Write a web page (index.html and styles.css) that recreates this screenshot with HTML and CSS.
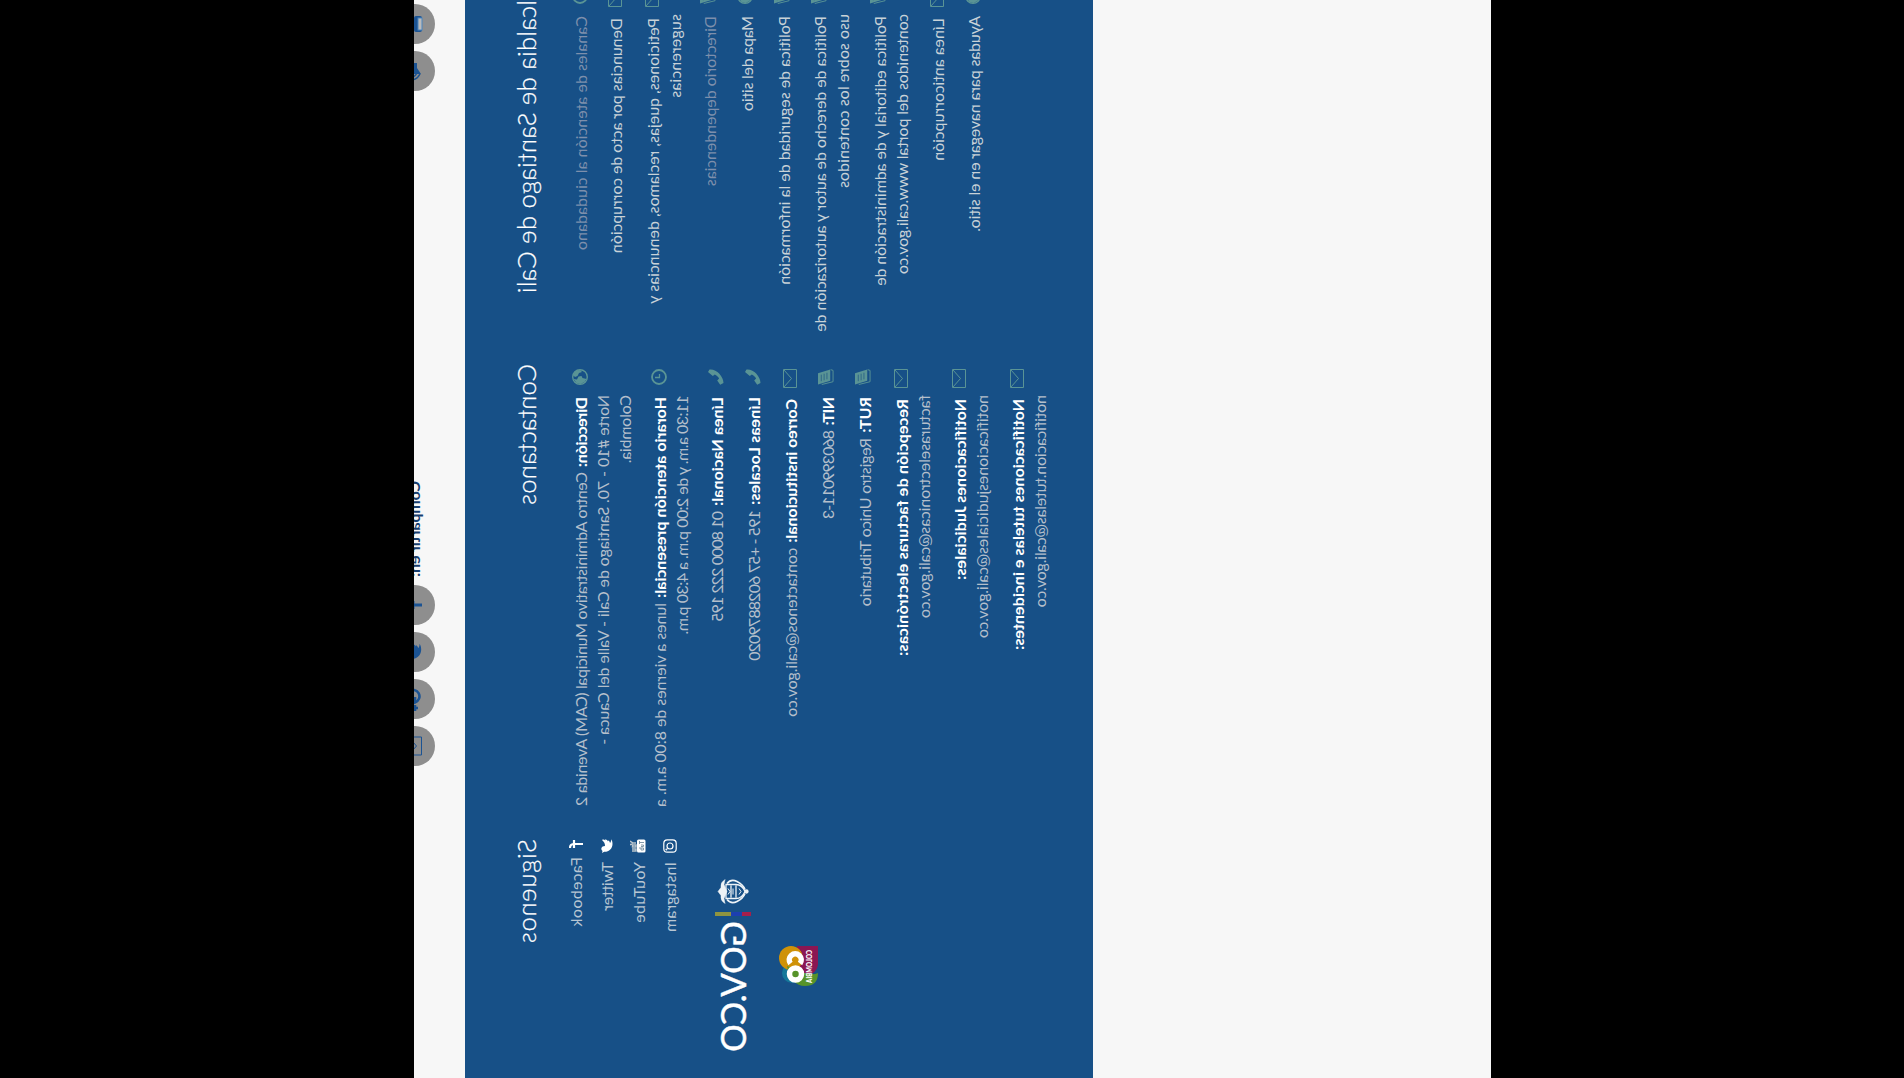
FILE: index.html
```html
<!DOCTYPE html>
<html lang="es">
<head>
<meta charset="utf-8">
<title>Alcaldía de Santiago de Cali</title>
<link rel="stylesheet" href="styles.css">
</head>
<body>
<svg class="defs" width="0" height="0">
  <symbol id="mail" viewBox="0 0 19 14"><path d="M.5.5h18v13H.5zM1 1l8.500 7.500L18 1" fill="none" stroke="currentColor"/></symbol>
  <symbol id="globe" viewBox="0 0 16 16"><circle cx="8" cy="8" r="7.300" fill="none" stroke="currentColor" stroke-width="1.400"/><path d="M2 3.500 6 1l2 2-1 2.500-3 1.500L3 10 1 8zM10 1.500l4 3 1 4-2 4-3 2-1-4-2-1 .5-3 3-1.500z" fill="currentColor"/></symbol>
  <symbol id="clock" viewBox="0 0 16 16"><circle cx="8" cy="8" r="7" fill="none" stroke="currentColor" stroke-width="1.800"/><path d="M8.500 4v4.500H5" fill="none" stroke="currentColor" stroke-width="1.300"/></symbol>
  <symbol id="phone" viewBox="0 0 16 16"><path d="M3 0 .5 1.500C-.5 8 7 15.500 14 15.500l1.700-3.300-4.200-3-2 1.900C8 10.300 6 8.500 5.500 6.800l1.500-2z" fill="currentColor"/></symbol>
  <symbol id="book" viewBox="0 0 17 17"><path d="M4.500 0h12l-4 13H.5z" fill="currentColor"/><path d="M6 3.500h7M5 6.500h7M4 9.500h7" fill="none" stroke="#2c6587"/><path d="M.7 13.500 1.500 16h12l3-12" fill="none" stroke="currentColor"/></symbol>
  <symbol id="bird" viewBox="0 0 14 14"><path d="M1 2c2 2.200 3.500 3 6 3 0-4 3.500-4.500 5-2.500L14 2l-1.200 2.200C13 9 9.500 12.500 5 12.500 3 12.500 1.500 12 .3 11.200c1.500 0 2.700-.3 3.700-1.200-1.500-.2-2.200-1-2.500-2h1C1 7.400.5 6.400.5 5l1 .3C.3 4.300.4 3 1 2z" fill="currentColor"/></symbol>
</svg>
<div class="page">
  <div class="shade top"></div>
  <div class="share">
    <span class="round"><svg viewBox="0 0 40 40"><rect x="12" y="19" width="16" height="8" rx="2" fill="#1b5393"/><rect x="14" y="23" width="12" height="4" fill="#bbb" stroke="#4a86c0"/></svg></span>
    <span class="round"><svg viewBox="0 0 40 40"><path d="M12 17h5l6-5v14l-6-4h-5z" fill="#1b5393"/><path d="M22 22q4-2 4-6M23 25q6-3 6-9" fill="none" stroke="#1b5393" stroke-width="1.500"/></svg></span>
    <b class="share-label fit" data-w="96">Compartir en:</b>
    <span class="round"><svg viewBox="0 0 40 40"><path d="M20 27V15q0-3 4-3M16 18h8" fill="none" stroke="#1b5393" stroke-width="3"/></svg></span>
    <span class="round blue"><svg viewBox="0 0 40 40"><use href="#bird" x="11" y="11" width="18" height="17"/></svg></span>
    <span class="round"><svg viewBox="0 0 40 40"><path d="M22.500 14a6.500 6.500 0 1 0 1 6H18M26 20h6M29 17v6" fill="none" stroke="#1b5393" stroke-width="2.600"/></svg></span>
    <span class="round blue"><svg viewBox="0 0 40 40"><use href="#mail" x="10" y="13" width="20" height="14"/></svg></span>
  </div>
  <footer class="footer">
    <section>
      <h2><span class="fit" data-w="311">Alcaldia de Santiago de Cali</span></h2>
      <ul class="strong">
        <li class="dim g-s"><svg><use href="#clock"/></svg><div><p><span class="fit" data-w="234">Canales de atención al ciudadano</span></p></div></li>
        <li><svg class="m"><use href="#mail"/></svg><div><p><span class="fit" data-w="235">Denuncias por acto de corrupción</span></p></div></li>
        <li class="g-s"><svg class="m"><use href="#mail"/></svg><div><p><span class="fit" data-w="286">Peticiones, quejas, reclamos, denuncias y</span></p><p><span class="fit" data-w="84">sugerencias</span></p></div></li>
        <li class="dim"><svg><use href="#book"/></svg><div><p><span class="fit" data-w="170">Directorio dependencias</span></p></div></li>
        <li><svg><use href="#globe"/></svg><div><p><span class="fit" data-w="95">Mapa del sitio</span></p></div></li>
        <li><svg><use href="#book"/></svg><div><p><span class="fit" data-w="269">Política de seguridad de la información</span></p></div></li>
        <li><svg><use href="#book"/></svg><div><p><span class="fit" data-w="316">Política de derecho de autor y autorización de</span></p><p><span class="fit" data-w="174">uso sobre los contenidos</span></p></div></li>
        <li class="g-m"><svg><use href="#book"/></svg><div><p><span class="fit" data-w="270">Política editorial y de administración de</span></p><p><span class="fit" data-w="260">contenidos del portal www.cali.gov.co</span></p></div></li>
        <li><svg class="m"><use href="#mail"/></svg><div><p><span class="fit" data-w="143">Línea anticorrupción</span></p></div></li>
        <li><svg><use href="#globe"/></svg><div><p><span class="fit" data-w="216">Ayudas para navegar en el sitio.</span></p></div></li>
      </ul>
    </section>
    <section>
      <h2><span class="fit" data-w="141">Contactanos</span></h2>
      <ul>
        <li class="g-s"><svg><use href="#globe"/></svg><div><p><b class="fit" data-w="70">Dirección:</b><span class="fit r" data-w="334">Centro Administrativo Municipal (CAM) Avenida 2</span></p><p><span class="fit" data-w="350">Norte #10 - 70. Santiago de Cali - Valle del Cauca -</span></p><p><span class="fit" data-w="68">Colombia.</span></p></div></li>
        <li class="g-s"><svg><use href="#clock"/></svg><div><p><b class="fit" data-w="201">Horario atención presencial:</b><span class="fit r" data-w="204">lunes a viernes de 8:00 a.m. a</span></p><p><span class="fit" data-w="239">11:30 a.m. y de 2:00 p.m. a 4:30 p.m.</span></p></div></li>
        <li><svg><use href="#phone"/></svg><div><p><b class="fit" data-w="109">Línea Nacional:</b><span class="fit r" data-w="110">01 8000 222 195</span></p></div></li>
        <li><svg><use href="#phone"/></svg><div><p><b class="fit" data-w="108">Líneas Locales:</b><span class="fit r" data-w="150">195 - +57 6028879020</span></p></div></li>
        <li><svg class="m"><use href="#mail"/></svg><div><p><b class="fit" data-w="144">Correo institucional:</b><span class="fit r" data-w="169">contactenos@cali.gov.co</span></p></div></li>
        <li><svg><use href="#book"/></svg><div><p><b class="fit" data-w="28">NIT:</b><span class="fit r" data-w="88">860399011-3</span></p></div></li>
        <li><svg><use href="#book"/></svg><div><p><b class="fit" data-w="36">RUT:</b><span class="fit r" data-w="168">Registro Unico Tributario</span></p></div></li>
        <li class="g-m"><svg class="m"><use href="#mail"/></svg><div><p><b class="fit" data-w="257">Recepción de facturas electrónicas:</b></p><p><span class="fit" data-w="223">facturaselectronicas@cali.gov.co</span></p></div></li>
        <li class="g-m"><svg class="m"><use href="#mail"/></svg><div><p><b class="fit" data-w="181">Notificaciones Judiciales:</b></p><p><span class="fit" data-w="243">notificacionesjudiciales@cali.gov.co</span></p></div></li>
        <li><svg class="m"><use href="#mail"/></svg><div><p><b class="fit" data-w="251">Notificaciones tutelas e incidentes:</b></p><p><span class="fit" data-w="212">notificacion.tutelas@cali.gov.co</span></p></div></li>
      </ul>
    </section>
    <section>
      <h2><span class="fit" data-w="105">Siguenos</span></h2>
      <ul class="social">
        <li><svg viewBox="0 0 14 14"><path d="M5 14V5q0-4 4-4M1 5h8" fill="none" stroke="currentColor" stroke-width="2.200"/></svg><span class="fit fb" data-w="70">Facebook</span></li>
        <li><svg><use href="#bird"/></svg><span class="fit" data-w="48">Twitter</span></li>
        <li><svg class="tall" viewBox="0 0 14 16"><path d="M2 0l2 3v3M4 3l2-3M6 2.500h2V6H6zM10 2v4h2V2" fill="none" stroke="#b9c4cc" stroke-width="1.500"/><rect x=".5" y="7" width="13" height="8.500" rx="1.500" fill="currentColor"/><path d="M2 9.500h3M3.500 9.500V14M6 11v2.500h1.500V11M9 9v4.500h2V11H9" fill="none" stroke="#8298a8"/></svg><span class="fit" data-w="61">YouTube</span></li>
        <li><svg viewBox="0 0 14 14" fill="none" stroke="currentColor" stroke-width="1.200"><rect x=".8" y=".8" width="12.400" height="12.400" rx="3.500"/><circle cx="7" cy="7" r="3"/><circle cx="10.600" cy="3.400" r=".4"/></svg><span class="fit" data-w="70">Instagram</span></li>
      </ul>
      <div class="gov">
        <svg class="crest" viewBox="0 0 26 32" fill="none" stroke="#eef3f7" stroke-width="1.300"><path d="M6 9h14v10q0 6-7 9-7-3-7-9zM7 14h12M7 19h12"/><path d="M5 10Q0 14 3 20t8 8M21 10q5 4 2 10t-8 8" stroke-width="1.700"/><path d="M1 8q3-5 8-4l4-3 4 3q5-1 8 4l-5-1-7 3-7-3z" fill="#eef3f7" stroke-width=".5"/><path d="M10 11l3 2 3-2M10 16h6M10 22l3 2 3-2" stroke-width="1"/><circle cx="13" cy="29.500" r="1.500" fill="#eef3f7"/></svg>
        <span class="flag"></span>
        <span class="wordmark fit" data-w="131">GOV.CO</span>
      </div>
      <svg class="brand" viewBox="0 0 40 40">
        <circle cx="27" cy="13" r="10" fill="#14779a"/>
        <path d="M0 18h20q8 0 8 10 0 10-10 10H0z" fill="#8b1653"/>
        <circle cx="12" cy="12" r="12" fill="#cf9208"/>
        <path d="M20 8q20 4 20 18 0 13-13 13 3-6-1-15z" fill="#579329"/>
        <path d="M0 18q6 6 12 6h15v10q-4 5-9 5H0z" fill="#8b1653"/>
        <g fill="none" stroke="#fff" stroke-width="5.500"><path d="M17.500 11.500a6 6 0 1 0 0 9.500"/><circle cx="28" cy="16.500" r="6"/></g>
        <text x="4" y="32.500" textLength="33" lengthAdjust="spacingAndGlyphs">COLOMBIA</text>
      </svg>
    </section>
  </footer>
  <div class="blank"></div>
  <div class="shade bottom"></div>
</div>
<script src="fit.js"></script>
</body>
</html>
```
FILE: styles.css
```css
* { box-sizing: border-box; }

html { overflow: hidden; height: 1078px; }

body {
  margin: 0;
  width: 1904px;
  height: 1078px;
  overflow: hidden;
  background: #000;
  font: 16px/22px Lato, "Open Sans", sans-serif;
}

.defs { position: absolute; }

/* Portrait page flipped along its diagonal */
.page {
  width: 1078px;
  height: 1904px;
  display: flex;
  flex-direction: column;
  transform: matrix(0, 1, 1, 0, 0, 0);
  transform-origin: 0 0;
}

.shade { background: #000; flex: none; }
.shade.top { height: 414px; }
.shade.bottom { flex: 1; }
.blank { height: 398px; background: #f7f7f7; }

.share {
  height: 51px;
  background: #f7f7f7;
  overflow: hidden;
  display: flex;
  align-items: flex-start;
  gap: 7px;
  padding-left: 4px;
}
.round {
  width: 40px;
  height: 40px;
  margin-top: -19px;
  border-radius: 50%;
  background: #8e8e8e;
  flex: none;
}
.round svg { display: block; width: 40px; height: 40px; }
.round.blue { color: #1b5393; }
.share-label {
  margin: -11px 1px 0 383px;
  color: #173e6e;
  font-size: 16px;
}

.footer {
  height: 628px;
  background: #175087;
  padding-top: 46px;
  margin-left: -18px;
  display: grid;
  grid-template-columns: 381px 475px 240px;
}

h2 {
  margin: 0 0 29px;
  padding-left: 1px;
  color: #fff;
  font-weight: 300;
  font-size: 25.500px;
  line-height: 30px;
  -webkit-text-stroke: .25px #fff;
}

ul { list-style: none; margin: 0; padding: 0; color: #b4bfcb; }
ul.strong { color: #c8d2d8; }
li { display: flex; margin-bottom: 14.700px; }
li.g-s { margin-bottom: 12.700px; }
li.g-m { margin-bottom: 13.700px; }
li.dim { color: #7d8fac; }
li p { margin: 0; height: 22.200px; white-space: nowrap; }
li p:first-child { padding-left: 2px; }
li b { color: #fff; }
li svg {
  flex: none;
  width: 16px;
  height: 16px;
  margin: 1.500px 10px 0 6px;
  color: #5a9495;
}
li svg.m { width: 19px; height: 14px; margin: 3px 7px 0 6px; }
li svg.m + div p:first-child { padding-left: 4px; }

.fit { display: inline-block; white-space: pre; }
.r { margin-left: 5px; }

.social { margin-top: -4px; }
.social li { align-items: flex-start; height: 20px; margin-bottom: 11.400px; line-height: 20px; color: #b8c6d3; }
.social svg { width: 14px; height: 14px; margin: 3px 9px 0 1px; color: #fff; }
.social svg.tall { height: 16px; margin-top: 1px; }
.social .fb { margin-left: -5px; }

.gov { display: flex; height: 36px; margin: 35px 0 0 40px; color: #fff; }
.crest { width: 27px; height: 32px; margin-top: 2px; }
.flag {
  width: 4px;
  height: 36px;
  margin: 0 5px 0 7px;
  background: linear-gradient(#8f9440 0 16px, #1c3fb0 16px 27px, #a51f4b 27px);
}
.wordmark { font-size: 34.500px; line-height: 36px; -webkit-text-stroke: .4px #fff; }

.brand { display: block; width: 40px; height: 40px; margin: 28px 0 0 108px; }
.brand text { fill: #fff; font: 900 7px Lato, sans-serif; }
```
FILE: fit.js
```js
document.querySelectorAll('.fit').forEach(function (el) {
  var natural = el.getBoundingClientRect().height;
  var target = Number(el.dataset.w);
  var count = el.textContent.length;
  el.style.letterSpacing = (target - natural) / count + 'px';
});
```
